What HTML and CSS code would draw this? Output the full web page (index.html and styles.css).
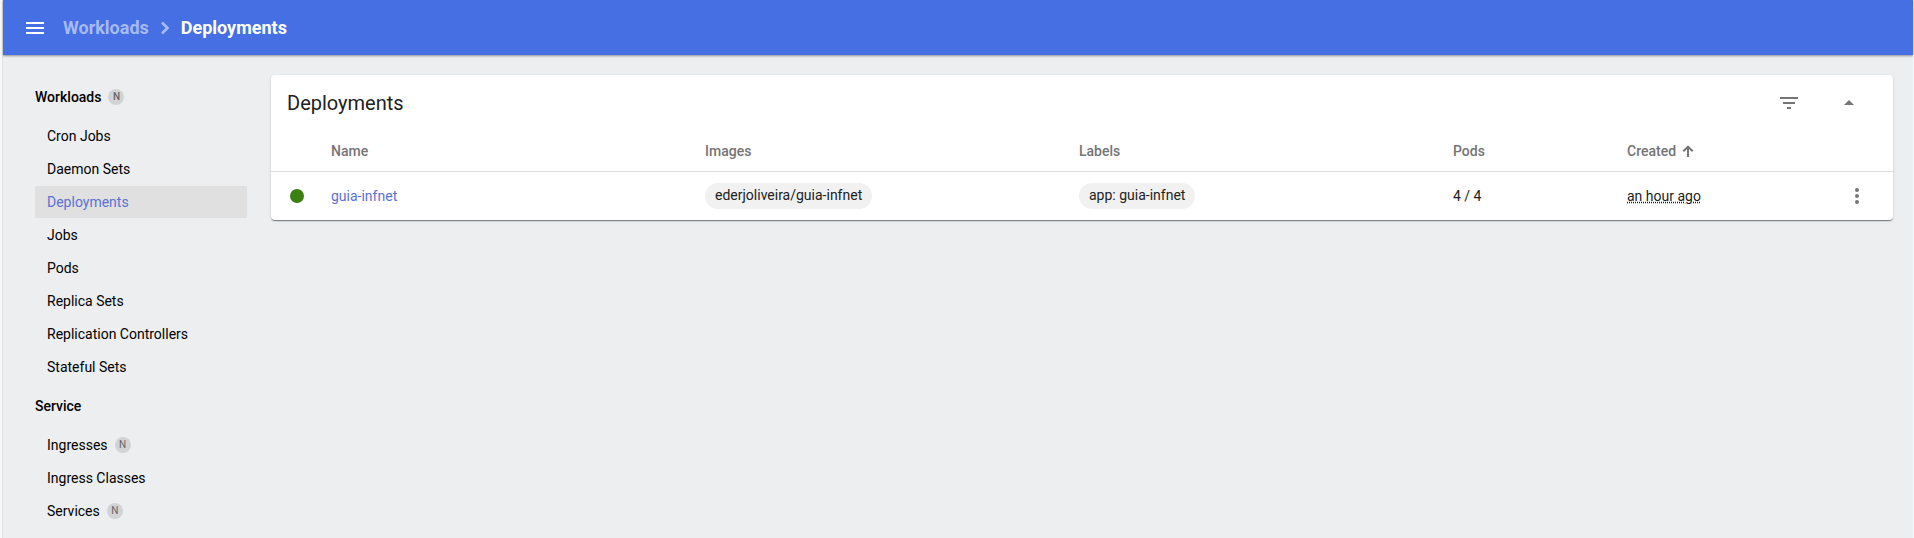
FILE: index.html
```html
<!DOCTYPE html>
<html lang="en">
<head>
<meta charset="utf-8">
<title>Deployments</title>
<link rel="stylesheet" href="styles.css">
</head>
<body>
<div class="app">
  <header class="toolbar">
    <button class="icon-button" aria-label="Toggle navigation">
      <svg class="icon" viewBox="0 0 24 24"><path d="M3 18h18v-2H3v2zm0-5h18v-2H3v2zm0-7v2h18V6H3z"/></svg>
    </button>
    <nav class="breadcrumbs" aria-label="Breadcrumbs">
      <a class="crumb" href="#workloads">Workloads</a>
      <svg class="crumb-arrow" viewBox="0 0 22 22"><path d="M8 5.500 13.500 11 8 16.500"/></svg>
      <span class="crumb-current">Deployments</span>
    </nav>
  </header>
  <div class="body">
    <nav class="sidebar" aria-label="Resources">
      <a class="nav-group" href="#workloads">Workloads<span class="badge">N</span></a>
      <a class="nav-item" href="#cronjobs">Cron Jobs</a>
      <a class="nav-item" href="#daemonsets">Daemon Sets</a>
      <a class="nav-item active" href="#deployments">Deployments</a>
      <a class="nav-item" href="#jobs">Jobs</a>
      <a class="nav-item" href="#pods">Pods</a>
      <a class="nav-item" href="#replicasets">Replica Sets</a>
      <a class="nav-item" href="#replicationcontrollers">Replication Controllers</a>
      <a class="nav-item" href="#statefulsets">Stateful Sets</a>
      <a class="nav-group" href="#service">Service</a>
      <a class="nav-item" href="#ingresses">Ingresses<span class="badge">N</span></a>
      <a class="nav-item" href="#ingressclasses">Ingress Classes</a>
      <a class="nav-item" href="#services">Services<span class="badge">N</span></a>
    </nav>
    <main class="content">
      <section class="card">
        <div class="card-header">
          <h1 class="card-title">Deployments</h1>
          <div class="card-actions">
            <button class="icon-button" aria-label="Filter">
              <svg class="icon" viewBox="0 0 24 24"><path d="M10 18h4v-2h-4v2zM3 6v2h18V6H3zm3 7h12v-2H6v2z"/></svg>
            </button>
            <button class="icon-button" aria-label="Collapse card">
              <svg class="icon" viewBox="0 0 24 24"><path d="m7 14 5-5 5 5z"/></svg>
            </button>
          </div>
        </div>
        <table class="table">
          <colgroup><col class="col-status"><col><col><col><col class="col-fixed"><col class="col-fixed"><col class="col-menu"></colgroup>
          <thead>
            <tr>
              <th></th><th>Name</th><th>Images</th><th>Labels</th><th>Pods</th>
              <th><button class="sort">Created<svg class="sort-arrow" viewBox="0 0 12 12"><path d="M5 12V4L2 7 .6 5.600 6 .2l5.400 5.400L10 7 7 4v8z"/></svg></button></th>
              <th></th>
            </tr>
          </thead>
          <tbody>
            <tr>
              <td class="status"><svg class="dot" viewBox="0 0 14 14" role="img" aria-label="Running"><circle cx="7" cy="7" r="7"/></svg></td>
              <td><a class="link" href="#guia-infnet">guia-infnet</a></td>
              <td><span class="chip">ederjoliveira/guia-infnet</span></td>
              <td><span class="chip">app: guia-infnet</span></td>
              <td>4 / 4</td>
              <td><span class="date">an hour ago</span></td>
              <td class="menu">
                <button class="icon-button" aria-label="Actions">
                  <svg class="icon" viewBox="0 0 24 24"><path d="M12 8a2 2 0 1 0 0-4 2 2 0 0 0 0 4zm0 2a2 2 0 1 0 0 4 2 2 0 0 0 0-4zm0 6a2 2 0 1 0 0 4 2 2 0 0 0 0-4z"/></svg>
                </button>
              </td>
            </tr>
          </tbody>
        </table>
      </section>
    </main>
  </div>
</div>
</body>
</html>
```
FILE: styles.css
```css
* {
  box-sizing: border-box;
}

body {
  margin: 0;
  background: #f8f8f9;
  color: #212121;
  font-family: Roboto, "Liberation Sans", sans-serif;
  font-size: 14px;
  line-height: 20px;
}

a {
  color: inherit;
  text-decoration: none;
}

button {
  padding: 0;
  border: 0;
  background: none;
  color: inherit;
  font: inherit;
  cursor: pointer;
}

.app {
  display: flex;
  flex-direction: column;
  min-height: 100vh;
  margin: 0 1px 0 2px;
  border-left: 1px solid #e2e3e5;
  background: #eceef0;
}

.toolbar {
  display: flex;
  align-items: center;
  gap: 16px;
  height: 55px;
  padding: 0 20px;
  background: #466fe3;
  box-shadow: 0 1px 2px rgba(0, 0, 0, 0.4);
  color: #fff;
}

.icon-button {
  display: flex;
  align-items: center;
  justify-content: center;
  width: 24px;
  height: 24px;
}

.icon {
  width: 24px;
  height: 24px;
  fill: currentColor;
}

.breadcrumbs {
  display: flex;
  align-items: center;
  gap: 5px;
  font-size: 18px;
  font-weight: 700;
}

.crumb,
.crumb-arrow {
  color: #a6bbf5;
}

.crumb-arrow {
  width: 22px;
  height: 22px;
  fill: none;
  stroke: currentColor;
  stroke-width: 2.600;
}

.body {
  display: flex;
  flex: 1;
}

.sidebar {
  display: flex;
  flex-direction: column;
  flex: none;
  gap: 1px;
  width: 244px;
  padding: 20px 0 0 32px;
  color: #000;
}

.nav-group,
.nav-item {
  display: flex;
  align-items: center;
  gap: 7px;
}

.nav-group {
  height: 44px;
  font-weight: 500;
}

.nav-item {
  height: 32px;
  padding-left: 12px;
}

.active {
  border-radius: 1px;
  background: #e0e0e0;
  color: #5a72d2;
}

.badge {
  width: 16px;
  height: 16px;
  border-radius: 50%;
  background: #d2d3d4;
  color: #666;
  font-size: 10px;
  line-height: 16px;
  text-align: center;
}

.content {
  flex: 1;
  padding: 20px 20px 20px 24px;
}

.card {
  border-radius: 4px;
  background: #fff;
  box-shadow: 0 2px 1px -1px rgba(0, 0, 0, 0.3), 0 1px 1px rgba(0, 0, 0, 0.2), 0 1px 3px rgba(0, 0, 0, 0.12);
}

.card-header {
  display: flex;
  align-items: center;
  justify-content: space-between;
  height: 56px;
  padding: 0 32px 0 16px;
}

.card-title {
  margin: 0;
  font-size: 20px;
  font-weight: 400;
}

.card-actions {
  display: flex;
  gap: 36px;
  color: #757575;
}

.table {
  width: 100%;
  border-collapse: separate;
  border-spacing: 0;
  table-layout: fixed;
}

.col-status {
  width: 60px;
}

.col-fixed {
  width: 174px;
}

.col-menu {
  width: 92px;
}

th {
  height: 41px;
  padding: 0;
  border-bottom: 1px solid #dcdcdc;
  color: #757575;
  font-weight: 500;
  text-align: left;
}

td {
  height: 48px;
  padding: 0;
}

.sort {
  display: flex;
  align-items: center;
  gap: 6px;
}

.sort-arrow {
  width: 12px;
  height: 12px;
  fill: currentColor;
}

.status {
  padding-left: 19px;
}

.dot {
  display: block;
  width: 14px;
  height: 14px;
  fill: #3c8012;
}

.link {
  color: #5a72d2;
}

.chip {
  display: inline-block;
  padding: 2px 10px 4px;
  border-radius: 13px;
  background: #f1f1f1;
}

.date {
  text-decoration: underline dotted;
}

.menu {
  padding-left: 44px;
  color: #757575;
}
```
